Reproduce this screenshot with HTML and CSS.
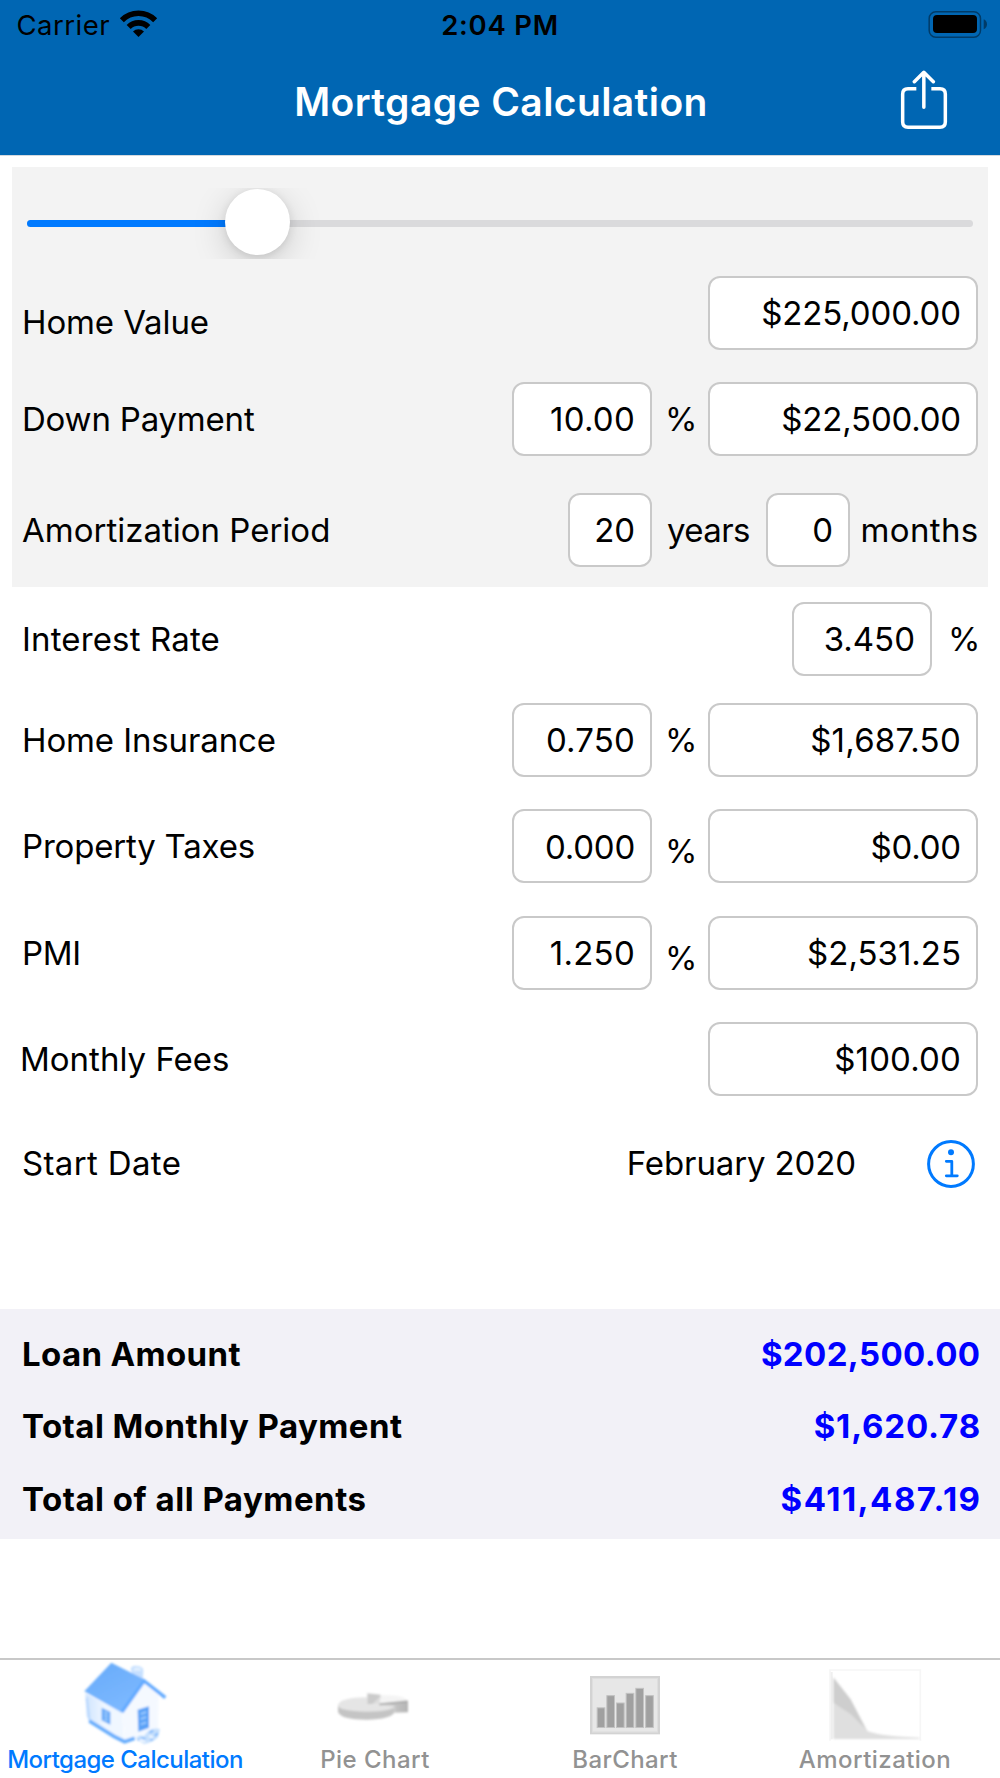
FILE: index.html
```html
<!DOCTYPE html>
<html lang="en">
<head>
<meta charset="utf-8">
<title>Mortgage Calculation</title>
<link rel="stylesheet" href="styles.css">
</head>
<body>
<div class="app">
  <header class="header">
    <div class="status">
      <div class="status-left">
        <span class="carrier">Carrier</span>
        <svg class="wifi" viewBox="357 27 117 87">
          <g fill="none" stroke="#000" stroke-width="17">
            <path d="M365.500 60.500A70.700 70.700 0 0 1 465.500 60.500"/>
            <path d="M386 81A41.700 41.700 0 0 1 445 81"/>
          </g>
          <path d="M415.500 111L399 94.500A23.500 23.500 0 0 1 432 94.500Z"/>
        </svg>
      </div>
      <span class="time">2:04 PM</span>
      <svg class="battery" viewBox="1284 30 180 86">
        <rect x="1287.500" y="35.500" width="154" height="76" rx="20" fill="none" stroke="#000" stroke-opacity=".42" stroke-width="4.500"/>
        <rect x="1299" y="45" width="132" height="54" rx="12"/>
        <path d="M1451 58Q1461 62 1461 73T1451 88Z" fill-opacity=".42"/>
      </svg>
    </div>
    <div class="nav">
      <h1 class="title">Mortgage Calculation</h1>
      <svg class="share" viewBox="1200 210 144 180" fill="none" stroke="#fff" stroke-width="10.500" stroke-linecap="round" stroke-linejoin="round">
        <path stroke-linecap="butt" d="M1249 266H1224Q1208 266 1208 282V366Q1208 381.500 1224 381.500H1320Q1336 381.500 1336 366V282Q1336 266 1320 266H1294"/>
        <path d="M1271.500 322V218M1243 245L1271.500 217L1300 245"/>
      </svg>
    </div>
  </header>

  <main class="form">
    <section class="panel">
      <div class="slider">
        <div class="track"><div class="track-fill"></div></div>
        <div class="thumb"></div>
      </div>
      <div class="row row-home">
        <span class="label tight">Home Value</span>
        <span class="field amount tight">$225,000.00</span>
      </div>
      <div class="row row-down">
        <span class="label tighter">Down Payment</span>
        <span class="field rate loose">10.00</span>
        <span class="unit">%</span>
        <span class="field amount tighter">$22,500.00</span>
      </div>
      <div class="row row-period">
        <span class="label label-a">Amortization Period</span>
        <span class="field count tight">20</span>
        <span class="unit unit-years">years</span>
        <span class="field count">0</span>
        <span class="unit unit-months">months</span>
      </div>
    </section>
    <section class="rows">
      <div class="row row-interest">
        <span class="label slight">Interest Rate</span>
        <span class="field rate">3.450</span>
        <span class="unit unit-end">%</span>
      </div>
      <div class="row row-insurance">
        <span class="label tight">Home Insurance</span>
        <span class="field rate slight">0.750</span>
        <span class="unit">%</span>
        <span class="field amount loose">$1,687.50</span>
      </div>
      <div class="row row-taxes">
        <span class="label tighter">Property Taxes</span>
        <span class="field rate tighter">0.000</span>
        <span class="unit unit-low">%</span>
        <span class="field amount tighter">$0.00</span>
      </div>
      <div class="row row-pmi">
        <span class="label tightest">PMI</span>
        <span class="field rate loose">1.250</span>
        <span class="unit unit-low">%</span>
        <span class="field amount">$2,531.25</span>
      </div>
      <div class="row row-fees">
        <span class="label label-fees">Monthly Fees</span>
        <span class="field amount slight">$100.00</span>
      </div>
      <div class="row row-start">
        <span class="label looser">Start Date</span>
        <span class="date tight">February 2020</span>
        <svg class="info" viewBox="0 0 50 50" fill="none" stroke="#007aff" stroke-width="3">
          <circle cx="25" cy="25" r="22.400"/>
          <path d="M20.300 22.300H25.800V36.800M20.300 36.800H31.300" stroke-width="2.800" stroke-linecap="round" stroke-linejoin="round"/>
          <circle cx="25" cy="13.200" r="3" fill="#007aff" stroke="none"/>
        </svg>
      </div>
    </section>
  </main>

  <section class="summary">
    <div class="total"><span class="total-loan">Loan Amount</span><span class="value">$202,500.00</span></div>
    <div class="total"><span class="total-month">Total Monthly Payment</span><span class="value value-month">$1,620.78</span></div>
    <div class="total"><span class="total-all">Total of all Payments</span><span class="value value-all">$411,487.19</span></div>
  </section>

  <nav class="tabs">
    <div class="tab active">
      <svg class="tab-icon" viewBox="0 30 750 264">
        <defs>
          <linearGradient id="roof" x1="0" y1="0" x2=".6" y2="1"><stop offset="0" stop-color="#66aafa"/><stop offset="1" stop-color="#7db9ff"/></linearGradient>
          <linearGradient id="wall" x1="0" y1="0" x2="1" y2="0"><stop offset="0" stop-color="#cfe4fe"/><stop offset=".5" stop-color="#f0f7ff"/></linearGradient>
          <filter id="soft" x="-10%" y="-10%" width="120%" height="120%"><feGaussianBlur stdDeviation="3"/></filter>
        </defs>
        <g filter="url(#soft)">
          <path d="M256 130L366 186L372 278L276 222L260 200Z" fill="url(#wall)"/>
          <path d="M366 186L430 98L476 136L474 244L374 276Z" fill="#f5f9ff"/>
          <path d="M392 56Q396 44 412 48Q432 50 430 64L428 92L396 72Z" fill="#c6e0ff"/>
          <path d="M402 60Q410 54 422 60" fill="none" stroke="#e6f2ff" stroke-width="7"/>
          <path d="M260 144L269 214" stroke="#b7d7fe" stroke-width="6"/>
          <path d="M334 38L432 88L366 188L253 124Z" fill="url(#roof)"/>
          <path d="M366 186L432 93L496 143" fill="none" stroke="#62aaff" stroke-width="10"/>
          <path d="M268 213L342 259L374 275L404 265" fill="none" stroke="#68aefd" stroke-width="11"/>
          <path d="M305 173L331 186V224L305 211Z" fill="#62a8f8"/>
          <path d="M313 186L323 191M313 196L323 201M313 206L323 211" stroke="#a7cffd" stroke-width="5"/>
          <path d="M413 179L447 169V233L415 245Z" fill="#5aa2f7"/>
          <path d="M422 192L439 186M422 207L439 201M422 223L439 217" stroke="#9bc9ff" stroke-width="6"/>
          <path d="M408 266Q416 252 432 258L444 244Q458 232 480 237L474 262Q458 278 432 282Z" fill="#c6e0fd"/>
          <path d="M414 272Q424 260 436 268M448 248L460 242M464 258L474 250M452 272L460 264" fill="none" stroke="#7bb6fb" stroke-width="6"/>
          <path d="M418 268L436 274M448 258L460 264" stroke="#f2f8ff" stroke-width="7"/>
        </g>
      </svg>
      <span class="tab-mortgage">Mortgage Calculation</span>
    </div>
    <div class="tab">
      <svg class="tab-icon" viewBox="0 30 750 264">
        <defs>
          <linearGradient id="side" x1="0" y1="0" x2="1" y2="0"><stop offset="0" stop-color="#d8d8d8"/><stop offset="1" stop-color="#b4b4b4"/></linearGradient>
          <filter id="soft2" x="-10%" y="-10%" width="120%" height="120%"><feGaussianBlur stdDeviation="2.500"/></filter>
        </defs>
        <g filter="url(#soft2)">
          <path d="M264 166V186Q272 209 350 209Q424 208 434 186V166Z" fill="#c4c4c4"/>
          <path d="M352 142L352 163L434 167Q432 184 350 185Q266 184 264 166Q268 143 352 142Z" fill="#e5e5e5"/>
          <path d="M388 163L474 154V187L434 188V168Z" fill="url(#side)"/>
          <path d="M352 130L392 134L388 163H352Z" fill="#cbcbcb"/>
          <path d="M366 163L394 136L388 163Z" fill="#dedede"/>
          <path d="M388 163L394 136Q464 134 473 153Z" fill="#f4f4f4"/>
          <path d="M388 163L473 154" stroke="#a6a6a6" stroke-width="5"/>
        </g>
      </svg>
      <span class="tab-pie">Pie Chart</span>
    </div>
    <div class="tab">
      <svg class="tab-icon" viewBox="0 30 750 264">
        <rect x="273" y="81" width="204" height="169" fill="#e7e7e7" stroke="#d3d3d3" stroke-width="6"/>
        <rect x="277.500" y="85.500" width="195" height="160" fill="none" stroke="#dedede" stroke-width="3"/>
        <g fill="#a0a0a0" stroke="#c2c2c2" stroke-width="3">
          <rect x="291.500" y="173.500" width="23" height="59"/>
          <rect x="320.500" y="137" width="23" height="95.500"/>
          <rect x="349.500" y="159" width="23" height="73.500"/>
          <rect x="378.500" y="130" width="23" height="102.500"/>
          <rect x="407.500" y="115" width="23" height="117.500"/>
          <rect x="437" y="137" width="23" height="95.500"/>
        </g>
      </svg>
      <span class="tab-bar">BarChart</span>
    </div>
    <div class="tab">
      <svg class="tab-icon" viewBox="0 30 750 264">
        <defs><filter id="soft3" x="-10%" y="-10%" width="120%" height="120%"><feGaussianBlur stdDeviation="2.500"/></filter></defs>
        <path d="M240 272V60H511V272" fill="none" stroke="#f6f6f6" stroke-width="5"/>
        <path d="M245 268V66" stroke="#efefef" stroke-width="6"/>
        <g filter="url(#soft3)">
          <path d="M250 82L302 148L352 244L300 200L250 158Z" fill="#cecece"/>
          <path d="M250 158L302 192L354 244Q400 260 508 263V267H250Z" fill="#dfdfdf"/>
        </g>
      </svg>
      <span class="tab-amort">Amortization</span>
    </div>
  </nav>
</div>
</body>
</html>
```
FILE: styles.css
```css
* { box-sizing: border-box; }
body { margin: 0; background: #fff; color: #000; font-family: Inter, "Liberation Sans", sans-serif; font-size: 33px; line-height: 40px; }
svg { display: block; flex: none; }
span { white-space: nowrap; }
.app { display: flex; flex-direction: column; width: 1000px; height: 1778px; overflow: hidden; }

.header { height: 155px; background: #0066b3; box-shadow: 0 1px 0 #d3d9df; flex: none; }
.status { display: grid; grid-template-columns: 1fr auto 1fr; align-items: center; height: 50px; padding: 0 12px 0 16px; font-size: 27.5px; }
.status-left { display: flex; align-items: center; }
.carrier { width: 103px; padding-left: .5px; letter-spacing: .5px; }
.wifi { width: 39px; height: 29px; margin-bottom: 3px; }
.time { margin: 0 2px 0 -2px; font-weight: 600; letter-spacing: .75px; }
.battery { width: 60px; height: 28.670px; justify-self: end; margin-bottom: 1px; }
.nav { display: grid; grid-template-columns: 1fr auto 1fr; align-items: center; height: 60px; margin-top: 20px; padding-right: 52px; }
.title { grid-column: 2; margin: 0 -53px 0 1px; padding-top: 3px; color: #fff; font-size: 39px; font-weight: 600; letter-spacing: .41px; }
.share { width: 48px; height: 60px; justify-self: end; }

.form { flex: none; }
.panel { margin: 12px 12px 0; height: 420px; padding-top: 21px; background: #f3f3f3; }
.slider { position: relative; height: 71px; padding: 32px 15px 0; overflow: hidden; }
.track { height: 7px; border-radius: 4px; background: #dadadc; overflow: hidden; }
.track-fill { width: 24.400%; height: 100%; background: #007aff; }
.thumb { position: absolute; left: 213px; top: 1px; width: 65px; height: 66px; border-radius: 50%; background: #fff; box-shadow: 0 8px 34px rgba(0,0,0,.17), 0 2px 8px rgba(0,0,0,.1); }

.row { display: flex; align-items: center; height: 75px; padding: 0 22px; }
.panel .row { padding: 0 10px; }
.row-home { margin-top: 17px; }
.row-home .label { padding-top: 18px; }
.row-down { margin-top: 31px; }
.row-period { margin-top: 36px; }
.row-interest { margin-top: 15px; }
.row-insurance { margin-top: 26px; }
.row-taxes { margin-top: 31px; }
.row-pmi { margin-top: 32px; }
.row-fees { margin-top: 31px; }
.row-start { margin-top: 29px; }
.label { margin-right: auto; padding-bottom: 2px; }
.label-fees { margin-left: -2px; }

.field { align-self: flex-start; height: 74px; border: 2px solid #c9c9c9; border-radius: 12px; background: #fff; padding-right: 15px; line-height: 71px; text-align: right; }
.row-taxes .field { line-height: 72px; }
.amount { width: 270px; }
.rate { width: 140px; }
.count { width: 84px; }
.unit { width: 56px; padding: 0 0 2px 13px; }
.unit-years { width: 114px; padding-left: 15px; letter-spacing: -.6px; }
.unit-months { width: 128px; padding-left: 10.500px; letter-spacing: .35px; }
.unit-end { width: 46px; padding-left: 16px; }
.unit-low { padding-top: 8px; padding-bottom: 0; }
.date { margin-right: 70px; padding-bottom: 2px; }
.info { width: 50px; height: 50px; margin-top: 1px; margin-right: 2px; }

.tightest { letter-spacing: -.3px; }
.tighter { letter-spacing: -.2px; }
.tight { letter-spacing: -.12px; }
.slight { letter-spacing: .15px; }
.loose { letter-spacing: .25px; }
.looser { letter-spacing: .35px; }

.summary { margin-top: 108px; height: 230px; flex: none; padding: 8.500px 20px 0 22px; background: #f2f1f7; font-weight: 700; }
.total { display: flex; justify-content: space-between; align-items: center; height: 72.500px; }
.total-loan { letter-spacing: .36px; }
.total-month { letter-spacing: .46px; }
.total-all { letter-spacing: .5px; }
.value { color: #00f; letter-spacing: .38px; margin-right: -.5px; }
.value-month { letter-spacing: .84px; margin-right: -1px; }
.value-all { letter-spacing: 1.470px; margin-right: -1.500px; }

.tabs { display: grid; grid-template-columns: repeat(4, 1fr); height: 120px; margin-top: auto; border-top: 2px solid #c8c8c8; }
.tab { display: flex; flex-direction: column; align-items: center; color: #929292; font-size: 24px; font-weight: 500; line-height: 24px; }
.active { color: #007aff; }
.tab-icon { width: 250px; height: 88px; }
.tab-mortgage { letter-spacing: -.53px; }
.tab-pie, .tab-amort { letter-spacing: .46px; }
.tab-bar { letter-spacing: .42px; }
```
